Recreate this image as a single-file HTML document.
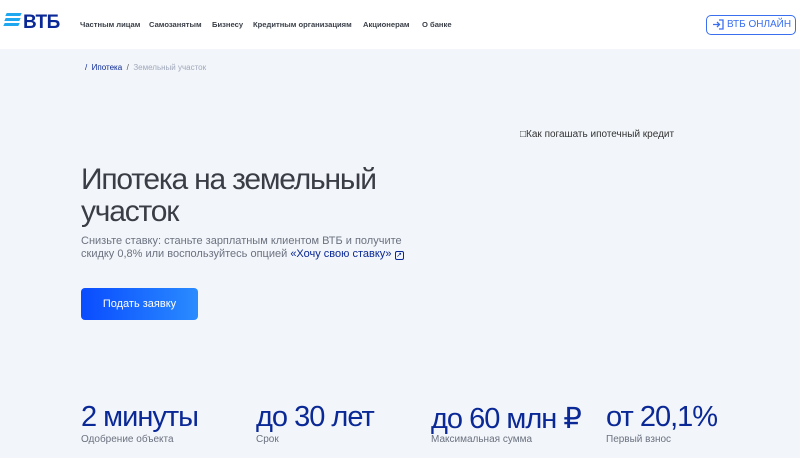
<!DOCTYPE html>
<html><head><meta charset="utf-8"><style>
*{margin:0;padding:0;box-sizing:border-box}
body{width:800px;height:458px;overflow:hidden;background:#f2f5f9;font-family:"Liberation Sans",sans-serif;color:#333;position:relative}
.hdr{position:absolute;left:0;top:0;width:800px;height:49px;background:#fff}
.nav{position:absolute;top:20px;font-size:7.6px;font-weight:bold;color:#3a3f48}
.abs{position:absolute;white-space:nowrap}
.btn{position:absolute;left:706px;top:15px;width:90px;height:20px;border:1.5px solid #3a6ff0;border-radius:5px;color:#3a6ff0;font-size:10px;line-height:17px;padding-left:20px}
.stat{position:absolute;top:401px;font-size:29px;color:#0a2896;letter-spacing:-1px}
.lab{position:absolute;top:434px;font-size:10px;color:#6b7280}
</style></head><body>
<div class="hdr"></div>
<div class="abs" style="left:6px;top:13px;width:15px;height:3px;background:#1fa7ef;transform:skewX(-25deg)"></div>
<div class="abs" style="left:5px;top:18px;width:15px;height:3px;background:#1fa7ef;transform:skewX(-25deg)"></div>
<div class="abs" style="left:4px;top:23px;width:15px;height:3px;background:#1fa7ef;transform:skewX(-25deg)"></div>
<div class="abs" style="left:23px;top:12px;font-size:19px;font-weight:bold;color:#0a2896;letter-spacing:-0.5px">ВТБ</div>
<div class="nav" style="left:80px">Частным лицам</div>
<div class="nav" style="left:149px">Самозанятым</div>
<div class="nav" style="left:212px">Бизнесу</div>
<div class="nav" style="left:253px">Кредитным организациям</div>
<div class="nav" style="left:363px">Акционерам</div>
<div class="nav" style="left:422px">О банке</div>
<div class="btn"><svg style="position:absolute;left:5px;top:3px" width="12" height="11" viewBox="0 0 12 11" fill="none" stroke="#3a6ff0" stroke-width="1.3"><path d="M1 5.5h6M5 3l2.5 2.5L5 8M7 1h4v9H7"/></svg>ВТБ ОНЛАЙН</div>
<div class="abs" style="left:85px;top:63px;font-size:8px;color:#0a2896">/ &nbsp;Ипотека &nbsp;<span style="color:#555">/</span> &nbsp;<span style="color:#a0a8bb">Земельный участок</span></div>
<div class="abs" style="left:520px;top:129px;font-size:10px;color:#333">&#x25A1;Как погашать ипотечный кредит</div>
<div class="abs" style="left:81px;top:164px;font-size:30px;line-height:32px;color:#3a3d45;letter-spacing:-1.2px">Ипотека на земельный<br>участок</div>
<div class="abs" style="left:81px;top:235px;font-size:11px;line-height:13px;color:#6b7280">Снизьте ставку: станьте зарплатным клиентом ВТБ и получите<br>скидку 0,8% или воспользуйтесь опцией <span style="color:#0a2896">«Хочу свою ставку»</span> <span style="display:inline-block;width:9px;height:9px;border:1px solid #0a2896;border-radius:2px;font-size:7px;line-height:7px;text-align:center;color:#0a2896">↗</span></div>
<div class="abs" style="left:81px;top:288px;width:117px;height:32px;border-radius:4px;background:linear-gradient(90deg,#0a4cff,#2a8bff);color:#fff;font-size:11px;line-height:32px;text-align:center">Подать заявку</div>
<div class="stat" style="left:81px">2 минуты</div><div class="lab" style="left:81px">Одобрение объекта</div>
<div class="stat" style="left:256px">до 30 лет</div><div class="lab" style="left:256px">Срок</div>
<div class="stat" style="left:431px">до 60 млн ₽</div><div class="lab" style="left:431px">Максимальная сумма</div>
<div class="stat" style="left:606px">от 20,1%</div><div class="lab" style="left:606px">Первый взнос</div>
</body></html>
